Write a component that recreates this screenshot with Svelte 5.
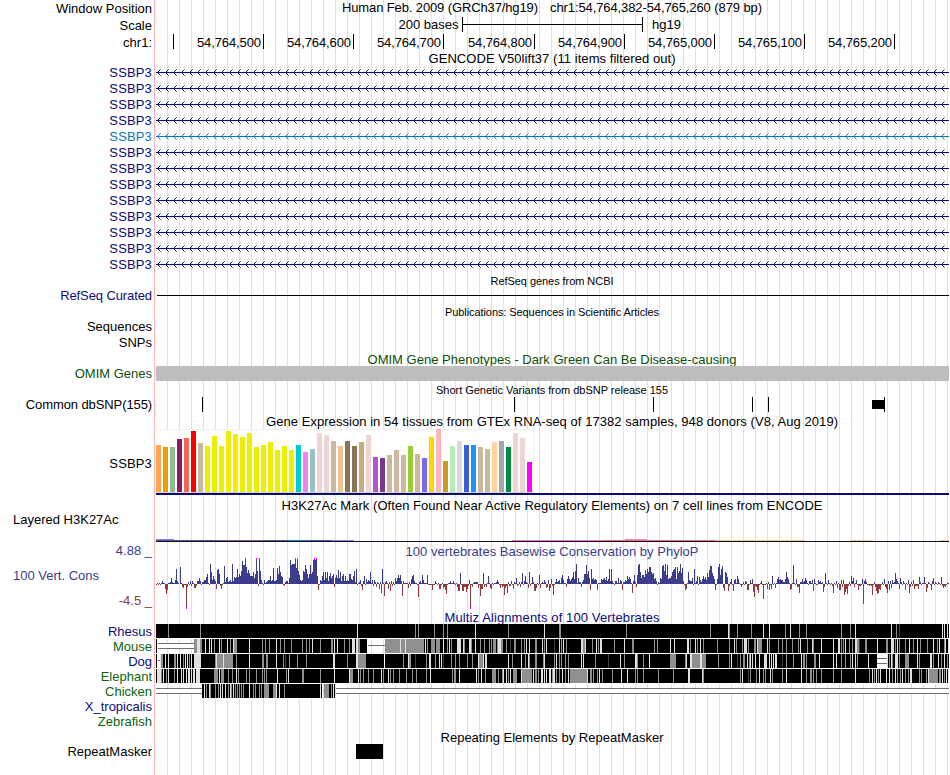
<script>
    const navy = "#0c0c78";
    const genes = Array.from({ length: 13 }, (_, i) => (i === 4 ? "#0c78b4" : navy));

    const ticks = [
        { x: 263, label: "54,764,500" },
        { x: 353, label: "54,764,600" },
        { x: 443, label: "54,764,700" },
        { x: 534, label: "54,764,800" },
        { x: 624, label: "54,764,900" },
        { x: 714, label: "54,765,000" },
        { x: 804, label: "54,765,100" },
        { x: 894, label: "54,765,200" }
    ];

    const snps = [202, 514, 653, 752, 768, 884];

    // GTEx: one bar per tissue
    const tissueHeights = [
        47, 45, 45, 53, 54, 61, 49, 46, 56, 46, 61, 58, 55, 59, 45, 47, 50, 42, 46, 42, 47, 40, 43, 59, 57, 51, 46, 51,
        46, 50, 57, 35, 34, 37, 42, 37, 46, 38, 34, 55, 63, 31, 46, 51, 47, 47, 45, 43, 50, 51, 45, 59, 54, 30
    ];
    const tissueColors = [
        "#ffa54f", "#ee9a00", "#8fbc8f", "#8b1c62", "#ee6a50", "#ff0000", "#cdb79e",
        ...Array(13).fill("#eeee00"),
        "#00cdcd", "#ee82ee", "#9ac0cd", "#eed5d2", "#eed5d2", "#cdb79e", "#eec591", "#8b7355",
        "#8b7355", "#cdaa7d", "#eed5d2", "#b452cd", "#7a378b", "#cdb79e", "#cdb79e", "#cdb79e",
        "#9acd32", "#cdb79e", "#7a67ee", "#ffd700", "#ffb6c1", "#cd9b1d", "#b4eeb4", "#d9d9d9",
        "#3a5fcd", "#1e90ff", "#cdb79e", "#cdb79e", "#ffd39b", "#a6a6a6", "#008b45", "#eed5d2",
        "#eed5d2", "#ff00ff"
    ];

    // H3K27Ac: x, y, width, color
    const marks = [
        [156, 27, 18, "#8080f8"], [156, 28, 63, "#50608c"], [219, 28, 45, "#785c78"], [264, 28, 22, "#3c6a6a"],
        [286, 28, 23, "#2878d0"], [309, 28, 22, "#3a60b8"], [331, 28, 23, "#8080f8"],
        [512, 28, 90, "#f878c8"], [602, 28, 113, "#e87078"], [625, 27, 22, "#ff80c0"],
        [715, 28, 90, "#f0c888"], [850, 28, 23, "#f0d090"], [940, 28, 9, "#f0c888"]
    ];

    // PhyloP scores in pixels, each chunk starts at its own x
    const phylop = [
        [156, "-1 1 -1 1 -1 1 3 1 1 -5 -10 -6 1 1 2 6 2 1 1 4 15 3 1 0 17 1 -3 -4 -1 -1 -25 -3 2 -1 3 -2 3 1 -4 -4 -2 3 3 6 3 -1 2 2"],
        [204, "4 4 7 10 1 -1 20 12 4 8 5 3 -5 14 15 10 -2 -5 -1 1 18 2 6 7 2 3 4 2 20 3 7 6 7 15 7 10 8 13 23 19 19 26 17 11 14 11"],
        [250, "8 8 8 12 6 10 26 13 -2 26 13 4 1 -1 4 1 2 3 4 4 8 3 4 16 3 3 4 16 10 18 12 8 7 -1 -2 2 3 3 1 6"],
        [290, "24 19 20 20 20 26 16 26 13 9 4 3 4 13 12 19 15 10 6 10 19 10 12 24 26 24 26 8 -6 -1"],
        [320, "4 3 8 12 4 12 6 12 3 8 11 6 8 10 -3 6 9 6 14 6 12 3 8 10 3 8 3 4 3 10 10 5 4 8 13 2 15 -1 1 2"],
        [360, "4 -2 -6 3 8 -1 5 2 4 3 12 1 4 -2 4 2 -3 2 1 -5 2 -9 15 1 -12 2 3 1 -5 2 -7 3 -2 2 -1 6 3 6 9 6 9 3 -12 3 1 1 1 1 -4 2 -2 5 8 9 3 1 1 -1 -13 2"],
        [420, "3 1 9 4 1 1 1 9 -1 -1 -1 -1 -6 -1 -1 3 1 -1 1 -5 -5 -1 1 -4 -3 -6 -10 -1 1 1 3 1 1 3 1 -1 1 -3 -7 -7"],
        [460, "11 -1 -7 -7 -3 -3 -8 -5 -2 4 -25 -1 -3 1 2 2 2 2 -4 -1 -12 -5 -5 11 -3 -1 -3 1 8 1 -4 -5 1 -1 1 1 2 4 2 -1"],
        [500, "-4 -1 -3 -2 -11 -4 -2 -9 2 -2 -2 3 -1 -5 2 1 6 -2 -1 2 -3 2 11 -1 3 8 2 1 -4 12 -2 1 7 2 -7 -7 -4 1 -1 9"],
        [540, "-4 1 2 1 4 2 -4 -3 4 -7 -4 5 -2 -11 -1 2 5 2 3 4 1 6 9 4 1 1 -3 5 8 5 3 5 7 12 5 13 20 1 6 2"],
        [580, "2 -3 2 4 10 10 19 10 13 6 -6 15 5 6 4 5 4 -6 1 1 1 5 4 5 6 4 7 3 5 15 3 15 3 1 -1 3 3 1 6 1"],
        [620, "4 3 -6 2 2 4 3 8 5 7 5 1 -9 3 9 2 -3 9 19 20 12 6 9 9 7 14 10 15 12 17 17 12 10 11 5 6 3 -1 2 1"],
        [660, "6 5 18 19 13 20 9 19 5 6 6 8 12 14 15 17 5 17 11 13 20 11 16 3 -1 -6 -5 1 12 4"],
        [690, "3 3 6 -1 15 1 3 8 -1 7 4 2 5 8 5 7 4 11 7 14 18 18 11 8 5 -6 -1 5 17 20 9 15 18 -4 -7 12 11 7 -7 -2"],
        [730, "2 5 -1 -7 4 5 1 8 5 1 -1 -3 -1 2 -1 3 2 -6 -6 -1 4 1 5 -8 -13 -2 -3 -6 -9 -1 1 3 -1 -15 -1 -1 1 -5 2 -6"],
        [770, "-1 -5 8 -1 1 -4 1 5 7 4 5 4 4 2 2 5 12 7 5 1 -6 -5 1 19 1 -1 5 -3 -3 -9 2 2 5 2 3 6 4 1 -1 3"],
        [810, "3 1 4 -7 5 1 -1 -1 4 2 3 1 2 -8 -3 11 1 -1 4 1 -1 1 -2 -9 1 -1 3 -4 1 -6 -6 4 -3 4 -11 -8 -5 -10 -2 2"],
        [850, "-2 8 3 6 -3 1 4 -1 -6 -2 -2 -1 5 -20 3 5 2 -1 -1 -2 -1 -2 -11 -1 2 -3 -7 -10 -9 -5 -6 -1 2 -1 5 -3 -5 -9 3 -6"],
        [890, "3 -4 4 1 2 11 5 3 1 -5 6 2 -1 3 1 -6 1 -1 4 -9 -3 2 -2 4 -5 -2 -2 -2 -5 7 2 -1 1 1 7 1 -8 -4 2 1"],
        [930, "-1 -6 3 6 -1 2 1 -1 2 1 -1 7 -2 -4 -2 -3 -1 1 1"]
    ];
    const scores = phylop.flatMap(([start, list]) => list.split(" ").map((v, i) => ({ x: start + i, v: Number(v) })));

    // Alignments: black blocks, gaps, and stripes written as x[:width]shade
    const shades = { g: "#8f8f8f", l: "#e1e1e1", d: "#404040", w: "#ffffff" };
    const species = [
        {
            name: "Rhesus", color: navy, blocks: [[156, 949]], gaps: [],
            stripes: "168g 200g 357l 415g 418g 434g 443g 447g 475l 508g 544l 559:2g 626g 710g 728l 729g 737g 751g 763l 769l 785g 790l 799g 806g 841g 850g 855l 891l 896g 899d 942l 944l 947l"
        },
        {
            name: "Mouse", color: "#0c640c", blocks: [[156, 157], [194, 367], [385, 949]], gaps: [[158, 194, 2], [368, 385, 1]],
            stripes: "194:3g 197:3l 200:2g 205l 209l 211l 214g 219l 221g 227l 230g 233l 234:3g 249l 262g 265g 269g 276l 280g 284g 291g 302g 306g 309g 312l 320g 331:2g 334l 337l 344g 349g 352:3l 356:2l 358:2g 385:39g 400l 405l 425l 427g 431:4g 436:4g 443l 447g 449l 451g 457:4l 463l 464g 469:2l 471g 475l 480g 484g 489g 491g 493:3g 497g 498:3l 501:2g 506g 510d 514:2g 521g 524g 526l 529l 535:2g 542l 544g 546l 554d 559l 561g 563l 566g 581:2l 583:2g 585l 592g 596l 598g 600:2l 614g 624l 632:2g 654g 657g 670l 674l 687:2l 690g 695l 697g 700l 703g 717g 729g 734l 736g 742g 744:3l 748g 754:2g 757l 758:4g 767l 769g 778g 782g 786g 792g 798g 800l 807g 812l 813g 821l 833l 838:2l 841g 843g 845l 849g 852g 855:2l 857:2g 859d 865:2g 877l 886:2g 891:3l 895g 897l 899g 905g 909l 913g 917l 920g 927g 933l 937g 939l 944g 945l 948l"
        },
        {
            name: "Dog", color: navy, blocks: [[156, 157], [160, 877], [887, 949]], gaps: [[158, 160, 1], [877, 887, 2]],
            stripes: "160l 161:2g 165l 168l 174:2g 177l 180l 183g 185l 187l 189g 191l 194:7l 215g 217:6g 216l 223l 224:9g 236g 249l 262:2g 266:2g 276l 283g 285d 289g 297g 306g 333:2l 347g 356:2l 358:8g 384w 403g 408l 409:2g 415d 426g 429:2l 435g 439l 441l 443d 451g 455g 459g 467g 472g 478l 479:4g 483l 485l 486l 508l 512g 521l 525g 528l 529g 535:2g 543g 544l 554g 556l 559g 561g 565g 568g 581l 583l 595g 608d 620l 624g 635:2l 637g 643g 649l 670:6g 685g 686l 690:2l 692:8g 700:2l 702:4g 718g 729g 731l 737d 740g 743:2g 747l 749g 750l 752l 755l 759l 764:2l 766l 769l 771l 773l 775:2l 782d 786g 793g 801l 803:2g 806g 814:2g 819l 833l 836l 841g 845g 850g 852l 855l 857g 868l 887l 889g 891l 892g 895:3l 899g 905:4g 917l 919g 930:2l 933g 938l 941g 944l 947g"
        },
        {
            name: "Elephant", color: "#0c640c", blocks: [[156, 949]], gaps: [],
            stripes: "157:4l 161g 163l 166g 168l 174g 177l 181l 183l 186l 188:2l 191l 193:2l 196:4l 214:4g 219l 221:3g 228g 232g 236l 238g 246g 249g 256g 262g 264g 266g 277l 286g 288l 302:2g 320g 334l 349l 350:3g 358l 360g 363g 368g 373g 381l 383g 388l 390g 393g 399g 406g 412g 416g 426g 430l 452g 454:2g 459l 476l 478g 481l 485g 492:4g 498g 502g 503l 506l 508g 510l 513:4g 521l 522:10g 533l 535:2g 538g 541:2l 544l 546l 549:2l 552g 553:2l 556g 559g 562l 565g 568l 570:17g 587l 590:2g 593g 597g 599l 602g 612g 621l 627l 635g 637g 643g 658g 673g 688:2l 702l 703g 740g 742l 748d 750g 756g 759l 763g 765g 770l 772g 782g 786l 801l 806g 810:2g 813g 816g 821g 833g 841g 855l 869g 872l 874g 876l 878g 880l 886l 889l 892g 895l 897g 900g 902l 905g 908g 910:2l 919g 921g 926g 928l 929:9g 939:2g 942l 944g 946l 948l"
        },
        {
            name: "Chicken", color: "#0c640c", blocks: [[202, 322], [324, 335]], gaps: [[156, 202, 2], [323, 324, 1], [336, 949, 2]],
            stripes: "204l 206g 209l 210g 215g 218g 220l 222l 225l 228g 230l 231g 233l 235g 237g 239g 241g 243g 249l 253g 255g 259g 261g 264:5g 273:3g 276l 279l 284g 320l 324:5g 331g 333l"
        },
        { name: "X_tropicalis", color: navy, blocks: [], gaps: [], stripes: "" },
        { name: "Zebrafish", color: "#0c640c", blocks: [], gaps: [], stripes: "" }
    ];

    function parse(text) {
        return [...text.matchAll(/(\d+)(?::(\d+))?([gldw])/g)].map((m) => ({
            x: Number(m[1]),
            width: Number(m[2] ?? 1),
            fill: shades[m[3]]
        }));
    }
</script>

{#snippet title(text, width, kind = "", height = 15, baseline = 13)}
    <svg class="title {kind}" viewBox="156 0 793 {height}" width="793" {height}>
        <text x={552 - width / 2} y={baseline} textLength={width}>{text}</text>
    </svg>
{/snippet}

<main>
    <div class="row position">
        <div class="label">Window Position</div>
        <svg viewBox="156 0 793 17" width="793" height="17">
            <text x="342" y="12" textLength="196">Human Feb. 2009 (GRCh37/hg19)</text>
            <text x="550" y="12" textLength="212">chr1:54,764,382-54,765,260 (879 bp)</text>
        </svg>
    </div>
    <div class="row position">
        <div class="label">Scale</div>
        <svg viewBox="156 0 793 17" width="793" height="17">
            <text x="398.5" y="12" textLength="60">200 bases</text>
            <path d="M462 0h1v7h179v-7h1v15h-1v-7h-179v7h-1z" />
            <text x="652" y="12">hg19</text>
        </svg>
    </div>
    <div class="row position">
        <div class="label">chr1:</div>
        <svg viewBox="156 0 793 17" width="793" height="17">
            <rect x="173" width="1" height="15" />
            {#each ticks as tick}
                <text x={tick.x - 66} y="13" textLength="64">{tick.label}</text>
                <rect x={tick.x} width="1" height="15" />
            {/each}
        </svg>
    </div>

    {@render title("GENCODE V50lift37 (11 items filtered out)", 247, "tight", 16, 12)}
    {#each genes as color}
        <div class="row gene" style:color>
            <div class="label">SSBP3</div>
            <svg viewBox="156 0 793 16" width="793" height="16">
                <rect x="156" y="8" width="793" height="1" fill="currentColor" />
                {#each { length: 99 } as _, i}
                    <path class="arrow" d="M{160.5 + i * 8} 5.5l-3 3l3 3" />
                {/each}
            </svg>
        </div>
    {/each}

    {@render title("RefSeq genes from NCBI", 123, "small", 16)}
    <div class="row navy">
        <div class="label narrow">RefSeq Curated</div>
        <svg viewBox="156 0 793 15" width="793" height="15">
            <rect x="157" y="7" width="792" height="1" fill="#000" />
        </svg>
    </div>

    {@render title("Publications: Sequences in Scientific Articles", 214, "small", 16)}
    <div class="row sequence"><div class="label">Sequences</div></div>
    <div class="row sequence"><div class="label">SNPs</div></div>

    {@render title("OMIM Gene Phenotypes - Dark Green Can Be Disease-causing", 369, "green")}
    <div class="row green">
        <div class="label">OMIM Genes</div>
        <div class="omim"></div>
    </div>

    {@render title("Short Genetic Variants from dbSNP release 155", 232, "small", 16)}
    <div class="row">
        <div class="label narrow">Common dbSNP(155)</div>
        <svg viewBox="156 0 793 15" width="793" height="15">
            {#each snps as x}
                <rect {x} width="1" height="15" />
            {/each}
            <rect x="872" y="3" width="13" height="9" />
        </svg>
    </div>

    {@render title("Gene Expression in 54 tissues from GTEx RNA-seq of 17382 samples, 948 donors (V8, Aug 2019)", 572, "", 17, 14)}
    <div class="row gtex">
        <div class="label">SSBP3</div>
        <svg viewBox="156 0 793 68" width="793" height="68">
            <rect x="156" width="378" height="64" fill="#f0f0f0" />
            <rect x="156" y="1" width="377" height="62" fill="#fff" />
            <rect x="156" y="63" width="378" height="1" fill="#d3d3d3" />
            {#each tissueHeights as height, i}
                <rect x={156 + i * 7} y={63 - height} width="5" {height} fill={tissueColors[i]} />
            {/each}
            <rect x="156" y="64" width="793" height="2" fill={navy} />
        </svg>
    </div>

    {@render title("H3K27Ac Mark (Often Found Near Active Regulatory Elements) on 7 cell lines from ENCODE", 541)}
    <div class="row h3k">
        <div class="label left">Layered H3K27Ac</div>
        <svg viewBox="156 0 793 31" width="793" height="31">
            {#each marks as [x, y, width, fill]}
                <rect {x} {y} {width} height="1" {fill} />
            {/each}
            <rect x="156" y="29" width="793" height="1" fill="#140c28" />
        </svg>
    </div>

    <div class="row phylop">
        <div class="scale">
            <span>4.88 _</span>
            <span class="name">100 Vert. Cons</span>
            <span class="min">-4.5 _</span>
        </div>
        <div>
            {@render title("100 vertebrates Basewise Conservation by PhyloP", 293, "inner")}
            <svg viewBox="156 0 793 51" width="793" height="51">
                {#each scores as { x, v }}
                    {#if v > 0}
                        <rect {x} y={26 - v} width="1" height={v} fill="#3c3c8c" />
                    {:else if v < 0}
                        <rect {x} y="26" width="1" height={-v} fill="#8c3c3c" />
                    {/if}
                    {#if v === 26}
                        <rect {x} y="0" width="1" height="2" fill="#ff00ff" />
                    {:else if v === -25}
                        <rect {x} y="49" width="1" height="2" fill="#ff00ff" />
                    {/if}
                {/each}
            </svg>
        </div>
    </div>

    {@render title("Multiz Alignments of 100 Vertebrates", 215, "navy")}
    {#each species as s}
        <div class="row" style:color={s.color}>
            <div class="label">{s.name}</div>
            <svg viewBox="156 0 793 15" width="793" height="15">
                {#each s.blocks as [from, to]}
                    <rect x={from} width={to - from} height="15" fill="#fff" />
                    <rect x={from} width={to - from} height="14" fill="#000" />
                {/each}
                {#each s.gaps as [from, to, lines]}
                    {#if lines === 2}
                        <rect x={from} y="4" width={to - from} height="6" fill="#707070" />
                        <rect x={from} y="5" width={to - from} height="4" fill="#fff" />
                    {:else}
                        <rect x={from} y="6" width={to - from} height="1" fill="#707070" />
                    {/if}
                {/each}
                {#each parse(s.stripes) as stripe}
                    <rect x={stripe.x} width={stripe.width} height="14" fill={stripe.fill} />
                {/each}
            </svg>
        </div>
    {/each}

    {@render title("Repeating Elements by RepeatMasker", 223)}
    <div class="row">
        <div class="label">RepeatMasker</div>
        <svg viewBox="156 0 793 15" width="793" height="15">
            <rect x="356" width="27" height="15" />
        </svg>
    </div>
</main>

<style>
    :global(body) {
        background: #fff;
    }

    /* Witte labelkolom, rode scheidingslijn en elke 12px een rasterlijn */
    main {
        box-sizing: border-box;
        width: 949px;
        height: 775px;
        overflow: hidden;
        font: 13px "Liberation Sans", Arial, sans-serif;
        color: #000;
        background:
            linear-gradient(#ffb4b4, #ffb4b4) 154px 0 / 1px 100% no-repeat,
            linear-gradient(#fff, #fff) 0 0 / 156px 100% no-repeat,
            linear-gradient(to right, #dcdcff 1px, transparent 1px) 11px 0 / 12px 100%;
    }

    svg {
        display: block;
        fill: currentColor;
        shape-rendering: crispEdges;
        overflow: visible;
    }

    .row {
        display: grid;
        grid-template-columns: 152px 793px;
        column-gap: 4px;
        height: 15px;
        line-height: 15px;
        white-space: nowrap;
    }
    .row.position {
        height: 17px;
        line-height: 17px;
    }
    .row.gene {
        height: 16px;
        line-height: 18px;
        letter-spacing: 0.15px;
    }
    .row.sequence {
        height: 16px;
        line-height: 16px;
    }
    .row.gtex {
        height: 68px;
        line-height: 70px;
        letter-spacing: 0.15px;
    }
    .row.h3k {
        height: 31px;
    }
    .row.phylop {
        height: 66px;
    }

    .label {
        text-align: right;
    }
    .label.narrow {
        letter-spacing: -0.1px;
    }
    .label.left {
        text-align: left;
        padding-left: 13px;
    }

    .title {
        margin-left: 156px;
    }
    .title.tight {
        margin-bottom: -3px;
    }
    .title.small {
        font-size: 11px;
    }
    .title.inner {
        margin-left: 0;
        color: #3c3c8c;
    }

    .navy {
        color: #0c0c78;
    }
    .green {
        color: #0c500c;
    }

    .arrow {
        fill: none;
        stroke: currentColor;
        stroke-width: 1;
        shape-rendering: auto;
    }

    .omim {
        background: #bebebe;
    }

    .scale {
        display: flex;
        flex-direction: column;
        justify-content: space-between;
        height: 65px;
        text-align: right;
        color: #3c3c8c;
    }
    .scale .name {
        padding-left: 13px;
        text-align: left;
    }
    .scale .min {
        color: #8c3c3c;
    }
</style>
